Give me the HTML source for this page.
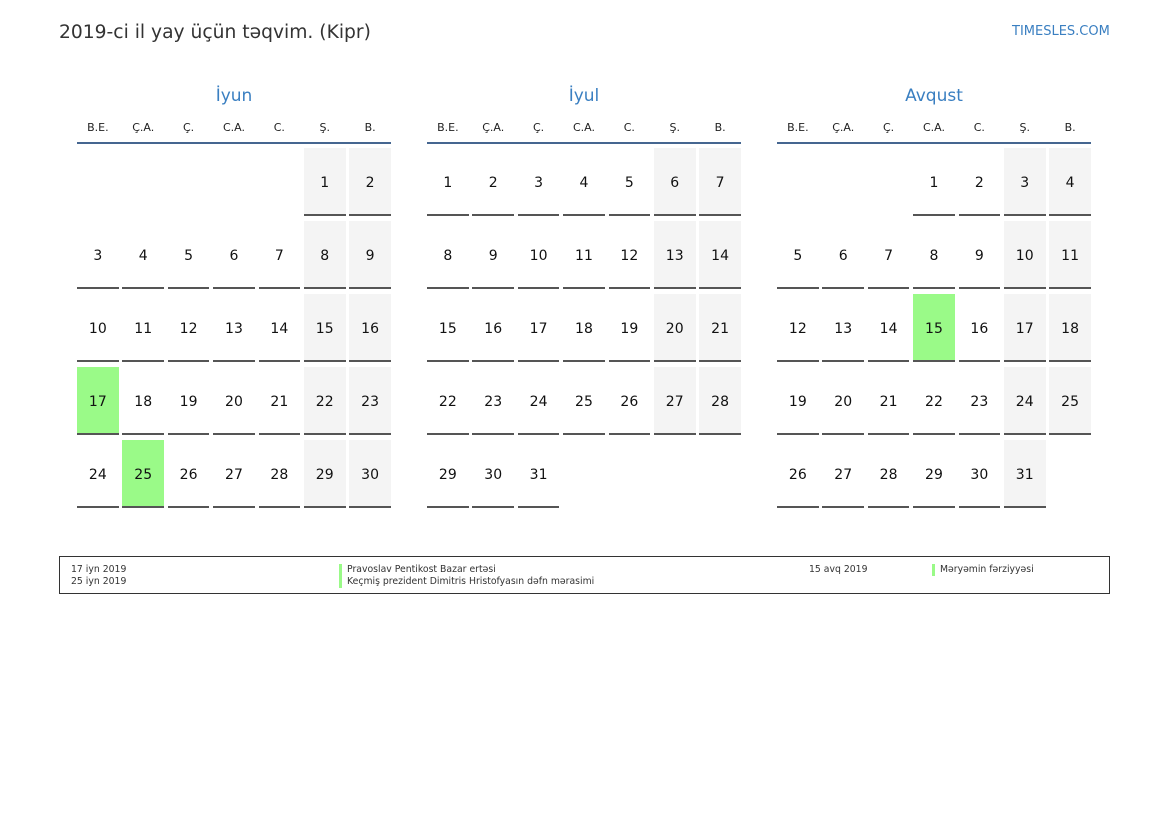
<!DOCTYPE html><html><head><meta charset="utf-8"><style>
body{margin:0;width:1169px;height:827px;background:#fff;font-family:"DejaVu Sans","Liberation Sans",sans-serif;position:relative;overflow:hidden}
.t{position:absolute;left:59px;top:22px;font-size:18.7px;color:#333}
.site{position:absolute;left:1012px;top:24px;font-size:13px;color:#3a7fc1}
.m{position:absolute;top:86px;width:314px}
.mt{text-align:center;font-size:17px;color:#3a7fc1;height:24px}
.hd{display:grid;grid-template-columns:repeat(7,41.7px);column-gap:3.7px;font-size:11px;color:#222;text-align:center;margin-top:10px;height:22px;line-height:15px;border-bottom:2px solid #456690}
.g{display:grid;grid-template-columns:repeat(7,41.7px);column-gap:3.7px;row-gap:5px;margin-top:4px}
.g div{height:66px;line-height:70px;text-align:center;font-size:14px;color:#111;border-bottom:2px solid #555}
.g div.e{border-bottom:2px solid transparent}
.g div.w{background:#f4f4f4}
.g div.h{background:#9afa88}
.lg{position:absolute;left:59px;top:556px;width:1049px;height:36px;border:1px solid #333;font-size:9.3px;color:#333}
.lg span{position:absolute;line-height:12px}
.bar{border-left:3px solid #9afa88;padding-left:5px}
</style></head><body>
<div class="t">2019-ci il yay üçün təqvim. (Kipr)</div>
<div class="site">TIMESLES.COM</div>

<div class="m" style="left:77px"><div class="mt">İyun</div>
<div class="hd"><span>B.E.</span><span>Ç.A.</span><span>Ç.</span><span>C.A.</span><span>C.</span><span>Ş.</span><span>B.</span></div>
<div class="g">
<div class="e"></div><div class="e"></div><div class="e"></div><div class="e"></div><div class="e"></div><div class="w">1</div><div class="w">2</div>
<div>3</div><div>4</div><div>5</div><div>6</div><div>7</div><div class="w">8</div><div class="w">9</div>
<div>10</div><div>11</div><div>12</div><div>13</div><div>14</div><div class="w">15</div><div class="w">16</div>
<div class="h">17</div><div>18</div><div>19</div><div>20</div><div>21</div><div class="w">22</div><div class="w">23</div>
<div>24</div><div class="h">25</div><div>26</div><div>27</div><div>28</div><div class="w">29</div><div class="w">30</div>
</div></div>

<div class="m" style="left:427px"><div class="mt">İyul</div>
<div class="hd"><span>B.E.</span><span>Ç.A.</span><span>Ç.</span><span>C.A.</span><span>C.</span><span>Ş.</span><span>B.</span></div>
<div class="g">
<div>1</div><div>2</div><div>3</div><div>4</div><div>5</div><div class="w">6</div><div class="w">7</div>
<div>8</div><div>9</div><div>10</div><div>11</div><div>12</div><div class="w">13</div><div class="w">14</div>
<div>15</div><div>16</div><div>17</div><div>18</div><div>19</div><div class="w">20</div><div class="w">21</div>
<div>22</div><div>23</div><div>24</div><div>25</div><div>26</div><div class="w">27</div><div class="w">28</div>
<div>29</div><div>30</div><div>31</div>
</div></div>

<div class="m" style="left:777px"><div class="mt">Avqust</div>
<div class="hd"><span>B.E.</span><span>Ç.A.</span><span>Ç.</span><span>C.A.</span><span>C.</span><span>Ş.</span><span>B.</span></div>
<div class="g">
<div class="e"></div><div class="e"></div><div class="e"></div><div>1</div><div>2</div><div class="w">3</div><div class="w">4</div>
<div>5</div><div>6</div><div>7</div><div>8</div><div>9</div><div class="w">10</div><div class="w">11</div>
<div>12</div><div>13</div><div>14</div><div class="h">15</div><div>16</div><div class="w">17</div><div class="w">18</div>
<div>19</div><div>20</div><div>21</div><div>22</div><div>23</div><div class="w">24</div><div class="w">25</div>
<div>26</div><div>27</div><div>28</div><div>29</div><div>30</div><div class="w">31</div>
</div></div>

<div class="lg">
<span style="left:11px;top:7px">17 iyn 2019</span>
<span style="left:11px;top:19px">25 iyn 2019</span>
<span class="bar" style="left:279px;top:7px">Pravoslav Pentikost Bazar ertəsi</span>
<span class="bar" style="left:279px;top:19px">Keçmiş prezident Dimitris Hristofyasın dəfn mərasimi</span>
<span style="left:749px;top:7px">15 avq 2019</span>
<span class="bar" style="left:872px;top:7px">Məryəmin fərziyyəsi</span>
</div>
</body></html>
